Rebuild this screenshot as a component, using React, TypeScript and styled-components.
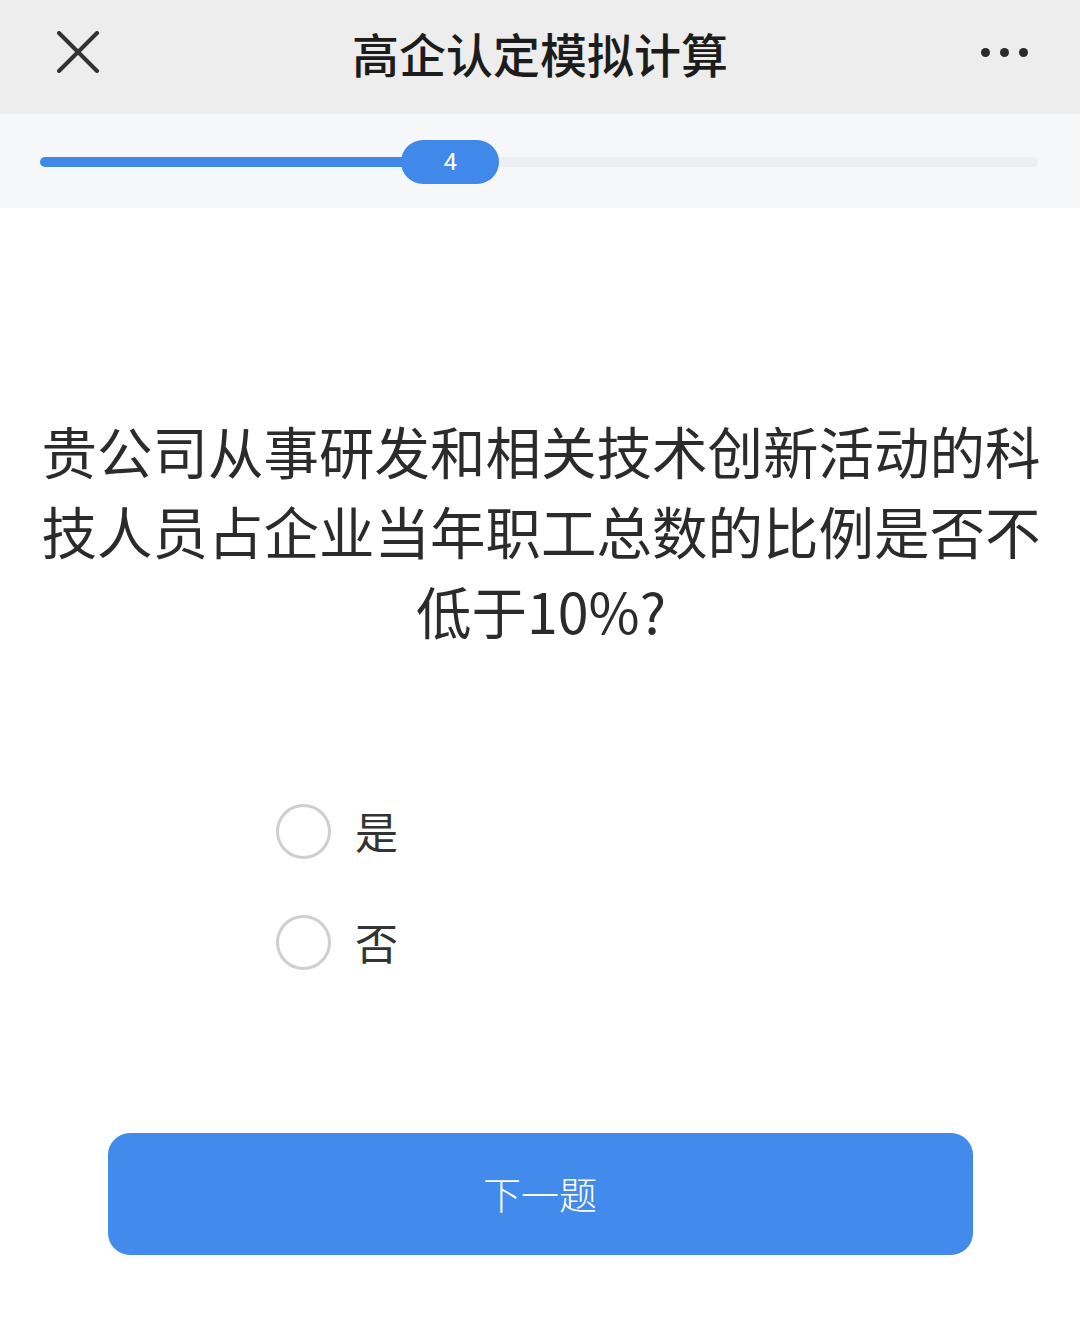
import styled, { createGlobalStyle } from 'styled-components';
import { useState } from 'react';

const GlobalStyle = createGlobalStyle`
    html, body {
        margin: 0;
        padding: 0;
        background: #ffffff;
    }
    body {
        font-family: "Noto Sans CJK SC", "Noto Sans", sans-serif;
        color: #333333;
    }
`;

const Page = styled.div`
    width: 1080px;
    min-height: 1324px;
    background: #ffffff;
    display: flex;
    flex-direction: column;
`;

const Header = styled.div`
    box-sizing: border-box;
    height: 114px;
    padding-bottom: 10px;
    background: #ededed;
    display: grid;
    grid-template-columns: 160px 1fr 160px;
    align-items: center;
`;

const CloseButton = styled.button`
    justify-self: start;
    margin-left: 54px;
    width: 48px;
    height: 48px;
    padding: 0;
    border: none;
    background: transparent;
    display: flex;
    align-items: center;
    justify-content: center;
`;

const Title = styled.h1`
    margin: 0;
    text-align: center;
    font-size: 47px;
    font-weight: 500;
    color: #1c1c1c;
`;

const MoreButton = styled.button`
    justify-self: end;
    margin-right: 52px;
    padding: 0;
    border: none;
    background: transparent;
    display: flex;
    gap: 10px;
`;

const Dot = styled.span`
    width: 9px;
    height: 9px;
    border-radius: 50%;
    background: #2a2a2a;
`;

const ProgressArea = styled.div`
    height: 94px;
    background: #f6f7f9;
    padding: 0 42px 0 40px;
    display: flex;
    align-items: center;
`;

const Track = styled.div`
    position: relative;
    flex: 1;
    height: 10px;
    border-radius: 5px;
    background: #eceef1;
    margin-top: 2px;
`;

const Fill = styled.div`
    height: 100%;
    border-radius: 5px;
    background: #4089ea;
`;

const Thumb = styled.div`
    position: absolute;
    top: 50%;
    transform: translate(-50%, -50%);
    width: 98px;
    height: 44px;
    border-radius: 22px;
    background: #4089ea;
    color: #ffffff;
    font-family: "Roboto", "Noto Sans", sans-serif;
    font-size: 24px;
    display: flex;
    align-items: center;
    justify-content: center;
`;

const Question = styled.p`
    margin: 202px 38px 0 40px;
    font-size: 55.5px;
    line-height: 80px;
    text-align: center;
    color: #2b2b2b;
    font-weight: 400;
`;

const Options = styled.div`
    margin-top: 153px;
    padding-left: 276px;
    display: flex;
    flex-direction: column;
    gap: 55px;
`;

const OptionRow = styled.label`
    display: flex;
    align-items: center;
    gap: 24px;
    height: 56px;
    cursor: pointer;
`;

const Radio = styled.span<{ $checked: boolean }>`
    box-sizing: border-box;
    width: 55px;
    height: 55px;
    border-radius: 50%;
    border: 3px solid ${p => (p.$checked ? '#4089ea' : '#cfcfcf')};
    display: flex;
    align-items: center;
    justify-content: center;

    &::after {
        content: '';
        width: 27px;
        height: 27px;
        border-radius: 50%;
        background: ${p => (p.$checked ? '#4089ea' : 'transparent')};
    }
`;

const OptionText = styled.span`
    font-size: 43px;
    color: #333333;
    margin-top: -2px;
`;

const NextButton = styled.button`
    margin: 163px auto 0;
    padding-bottom: 4px;
    width: 865px;
    height: 122px;
    border: none;
    border-radius: 22px;
    background: #428aeb;
    color: #ffffff;
    font-family: "Noto Sans CJK SC", "Noto Sans", sans-serif;
    font-size: 38px;
    font-weight: 300;
    cursor: pointer;
`;

export default function App() {
    const [answer, setAnswer] = useState<string | null>(null);
    const progress = 38;
    const choices = ['是', '否'];

    return (
        <Page>
            <GlobalStyle />
            <Header>
                <CloseButton aria-label="关闭">
                    <svg width="42" height="42" viewBox="0 0 42 42">
                        <path d="M2 2 L40 40 M40 2 L2 40" stroke="#333" strokeWidth="4" strokeLinecap="round" />
                    </svg>
                </CloseButton>
                <Title>高企认定模拟计算</Title>
                <MoreButton aria-label="更多">
                    <Dot />
                    <Dot />
                    <Dot />
                </MoreButton>
            </Header>
            <ProgressArea>
                <Track>
                    <Fill style={{ width: `${progress}%` }} />
                    <Thumb style={{ left: `${progress + 3.1}%` }}>4</Thumb>
                </Track>
            </ProgressArea>
            <Question>
                贵公司从事研发和相关技术创新活动的科技人员占企业当年职工总数的比例是否不低于10%?
            </Question>
            <Options>
                {choices.map(c => (
                    <OptionRow key={c} onClick={() => setAnswer(c)}>
                        <Radio $checked={answer === c} />
                        <OptionText>{c}</OptionText>
                    </OptionRow>
                ))}
            </Options>
            <NextButton>下一题</NextButton>
        </Page>
    );
}
